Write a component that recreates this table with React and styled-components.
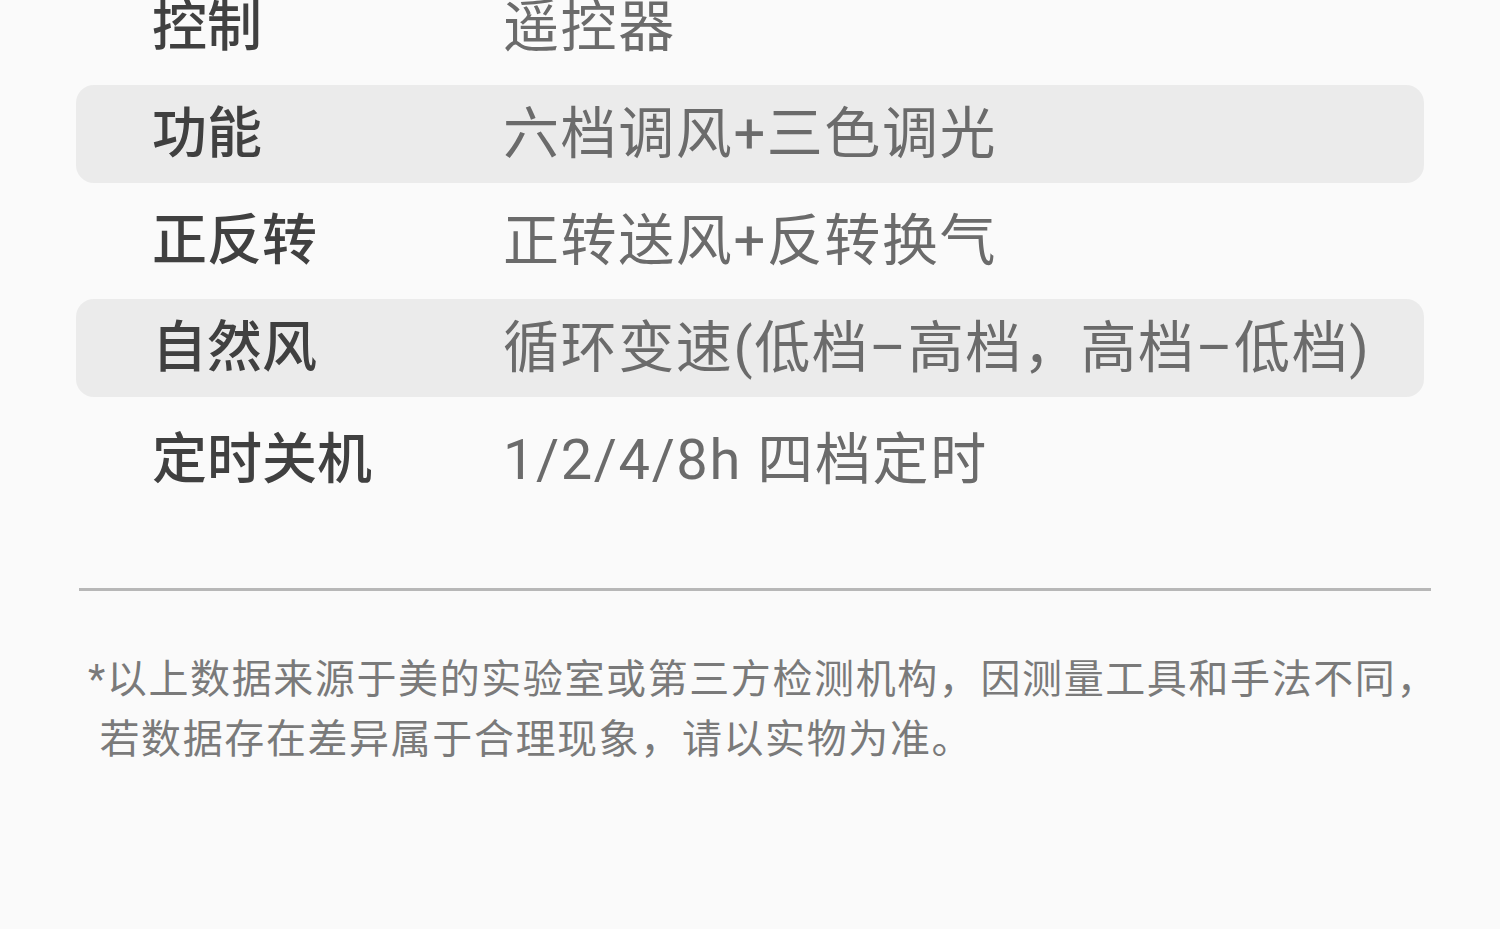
import styled, { createGlobalStyle } from "styled-components";

const GlobalStyle = createGlobalStyle`
  html, body {
    margin: 0;
    padding: 0;
    background: #fafafa;
  }
  body {
    font-family: Roboto, "Noto Sans CJK SC", sans-serif;
    overflow: hidden;
  }
`;

const Page = styled.div`
  width: 1500px;
  height: 929px;
  overflow: hidden;
  background: #fafafa;
`;

const SpecList = styled.div`
  margin: -22px 76px 0 76px;
  display: flex;
  flex-direction: column;
  gap: 9px;
`;

const SpecRow = styled.div`
  display: grid;
  grid-template-columns: 351px 1fr;
  align-items: center;
  box-sizing: border-box;
  height: 98px;
  padding: 0 0 ${(p) => p.$lift}px 76px;
  border-radius: 18px;
  background: ${(p) => (p.$shaded ? "#ebebeb" : "transparent")};
`;

const Label = styled.span`
  font-family: "Noto Sans CJK SC", sans-serif;
  font-size: 55px;
  font-weight: 500;
  color: #404040;
  white-space: nowrap;
`;

const Value = styled.span`
  font-size: 56px;
  font-weight: 400;
  letter-spacing: 1.6px;
  color: #6b6b6b;
  white-space: nowrap;
`;

const Divider = styled.hr`
  margin: 84px 69px 0 79px;
  border: none;
  height: 3px;
  background: #b7b7b7;
`;

const Note = styled.p`
  margin: 59px 0 0 88px;
  font-size: 40px;
  line-height: 60px;
  letter-spacing: 1.6px;
  color: #7a7a7a;
  white-space: pre;
`;

const specs = [
  ["控制", "遥控器"],
  ["功能", "六档调风+三色调光"],
  ["正反转", "正转送风+反转换气"],
  ["自然风", "循环变速(低档–高档，高档–低档)"],
  ["定时关机", "1/2/4/8h 四档定时"],
];

const App = () => {
  return (
    <Page>
      <GlobalStyle />
      <SpecList>
        {specs.map(([label, value], i) => (
          <SpecRow
            key={label}
            $shaded={i % 2 === 1}
            $lift={i === specs.length - 1 ? 2 : 12}
          >
            <Label>{label}</Label>
            <Value>{value}</Value>
          </SpecRow>
        ))}
      </SpecList>
      <Divider />
      <Note>
        {"*以上数据来源于美的实验室或第三方检测机构，因测量工具和手法不同，\n 若数据存在差异属于合理现象，请以实物为准。"}
      </Note>
    </Page>
  );
};

export default App;
